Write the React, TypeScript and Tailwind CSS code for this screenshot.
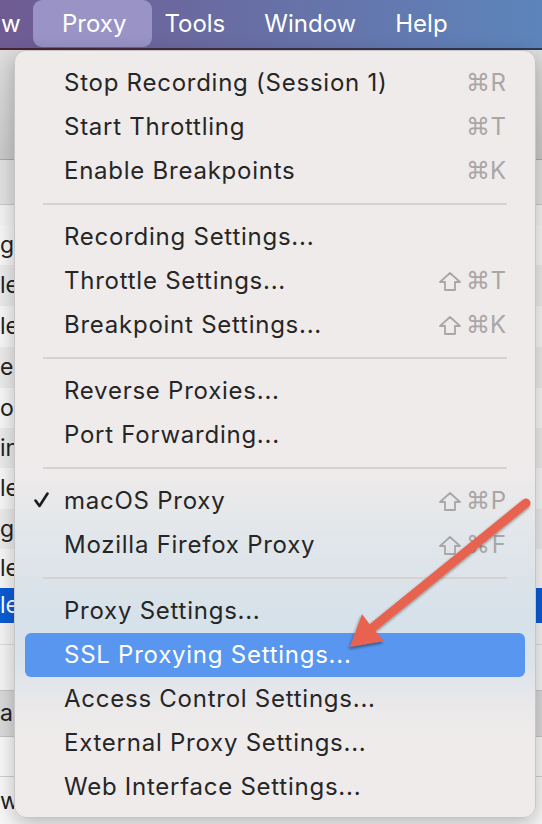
import { Fragment } from "react";

// Elementos del menú Proxy
type Item = { label: string; keys?: string[]; checked?: boolean; active?: boolean };

const groups: Item[][] = [
  [
    { label: "Stop Recording (Session 1)", keys: ["", "⌘", "R"] },
    { label: "Start Throttling", keys: ["", "⌘", "T"] },
    { label: "Enable Breakpoints", keys: ["", "⌘", "K"] },
  ],
  [
    { label: "Recording Settings..." },
    { label: "Throttle Settings...", keys: ["⇧", "⌘", "T"] },
    { label: "Breakpoint Settings...", keys: ["⇧", "⌘", "K"] },
  ],
  [{ label: "Reverse Proxies..." }, { label: "Port Forwarding..." }],
  [
    { label: "macOS Proxy", keys: ["⇧", "⌘", "P"], checked: true },
    { label: "Mozilla Firefox Proxy", keys: ["⇧", "⌘", "F"] },
  ],
  [
    { label: "Proxy Settings..." },
    { label: "SSL Proxying Settings...", active: true },
    { label: "Access Control Settings..." },
    { label: "External Proxy Settings..." },
    { label: "Web Interface Settings..." },
  ],
];

// Filas de la ventana de fondo (solo se ven los bordes)
const rows = [
  { h: "h-[20px]", bg: "bg-[#f3f3f3]", text: "" },
  { h: "h-[40px]", bg: "bg-[#f6f6f6]", text: "go" },
  { h: "h-[41px]", bg: "bg-[#ebebeb]", text: "le" },
  { h: "h-[41px]", bg: "bg-[#f6f6f6]", text: "le" },
  { h: "h-[41px]", bg: "bg-[#ebebeb]", text: "e" },
  { h: "h-[40px]", bg: "bg-[#f6f6f6]", text: "oc" },
  { h: "h-[40px]", bg: "bg-[#ebebeb]", text: "in" },
  { h: "h-[41px]", bg: "bg-[#f6f6f6]", text: "le" },
  { h: "h-[40px]", bg: "bg-[#ebebeb]", text: "go" },
  { h: "h-[39px]", bg: "bg-[#f6f6f6]", text: "le" },
];

// Texto recortado bajo el menú
function Clip({ text, white }: { text: string; white?: boolean }) {
  return (
    <div className={`w-[14px] overflow-hidden whitespace-nowrap text-[23px] ${white ? "text-white" : "text-[#222]"}`}>
      {text}
    </div>
  );
}

// Tecla Mayús dibujada como contorno
function ShiftIcon() {
  return (
    <svg width="22" height="19" viewBox="0 0 22 19">
      <path d="M11 1 L21 10 L16 10 L16 18 L6 18 L6 10 L1 10 Z" fill="none" stroke="#aaa6a6" strokeWidth="1.8" strokeLinejoin="round" />
    </svg>
  );
}

function Shortcut({ keys }: { keys: string[] }) {
  return (
    <div className="flex items-center text-[#aaa6a6]">
      <span className="w-[27px] flex items-center">{keys[0] ? <ShiftIcon /> : null}</span>
      <span className="w-[22px] text-center font-['DejaVu_Sans',sans-serif] text-[24px] leading-none">{keys[1]}</span>
      <span className="w-[18px] text-right text-[24px] leading-none">{keys[2]}</span>
    </div>
  );
}

function Check() {
  return (
    <svg width="15" height="16" viewBox="0 0 15 16" className="absolute left-[9px] top-[13px]">
      <path d="M1.5 8.5 L5.5 14 L13.5 1.5" fill="none" stroke="#1c1c1c" strokeWidth="2.6" strokeLinecap="round" strokeLinejoin="round" />
    </svg>
  );
}

function MenuRow({ item }: { item: Item }) {
  return (
    <div
      className={`relative mx-[10px] h-[44px] flex items-center justify-between pl-[39px] pr-[19px] rounded-[6px] ${
        item.active ? "bg-[#5896f0] text-white" : "text-[#262626]"
      }`}
    >
      {item.checked && <Check />}
      <span className="text-[24px] leading-none tracking-[0.75px]">{item.label}</span>
      {item.keys && <Shortcut keys={item.keys} />}
    </div>
  );
}

export default function App() {
  return (
    <div className="relative w-[542px] h-[824px] overflow-hidden bg-white font-['Inter','Liberation_Sans',sans-serif]">
      {/* Barra de menú */}
      <div className="h-[48px] flex items-center bg-gradient-to-r from-[#6f5b92] via-[#6770a6] to-[#5c85bc] text-white text-[24px]">
        <span className="w-[33px] pl-[1px]">w</span>
        <span className="h-[47px] -mt-[1px] flex items-center pl-[29px] pr-[26px] rounded-[9px] bg-[#9993c6]">Proxy</span>
        <span className="ml-[12px]">Tools</span>
        <span className="ml-[39px]">Window</span>
        <span className="ml-[39px]">Help</span>
      </div>
      <div className="h-[2px] bg-gradient-to-r from-[#4a2433] to-[#2d3a5a]" />

      {/* Ventana de fondo */}
      <div className="h-[110px] bg-gradient-to-b from-[#dedede] to-[#c9c9c9] border-b border-[#a9a9a9]" />
      <div className="h-[45px] bg-[#e1e1e1] border-b border-[#c6c6c6]" />
      {rows.map((r, i) => (
        <div key={i} className={`${r.h} ${r.bg} flex items-center`}>
          <Clip text={r.text} />
        </div>
      ))}
      <div className="h-[35px] bg-[#0b5cd5] flex items-center">
        <Clip text="le" white />
      </div>
      <div className="h-[22px] bg-[#f4f4f4] border-b border-[#dcdcdc]" />
      <div className="h-[45px] bg-[#f4f4f4]" />
      <div className="h-[47px] bg-[#d9d9d9] border-y border-[#c4c4c4] flex items-center">
        <Clip text="ar" />
      </div>
      <div className="h-[40px] bg-[#f7f7f7] border-b border-[#cfcfcf]" />
      <div className="h-[49px] bg-[#f7f7f7] flex items-center">
        <Clip text="w." />
      </div>

      {/* Menú desplegable */}
      <div className="absolute left-[14px] top-[50px] w-[522px] h-[768px] rounded-[12px] py-[10px] border border-[#c9c5c5] shadow-[0_6px_20px_rgba(0,0,0,0.25)] bg-[linear-gradient(to_bottom,#efebeb_0%,#efebeb_54%,#e1e6ea_64%,#d6e1e9_74%,#dbe3ea_80%,#ebe9ea_86%,#efebeb_90%,#efebeb_100%)]">
        {groups.map((g, gi) => (
          <Fragment key={gi}>
            {gi > 0 && (
              <div className="h-[22px] flex items-center px-[28px]">
                <div className="h-[2px] w-full bg-[#d7d2d2]" />
              </div>
            )}
            {g.map((item) => (
              <MenuRow key={item.label} item={item} />
            ))}
          </Fragment>
        ))}
      </div>

      {/* Flecha de anotación */}
      <svg className="absolute left-0 top-0 pointer-events-none" width="542" height="824" viewBox="0 0 542 824">
        <defs>
          <filter id="sh" x="-20%" y="-20%" width="140%" height="140%">
            <feDropShadow dx="-1" dy="2" stdDeviation="1.5" floodColor="#000" floodOpacity="0.45" />
          </filter>
        </defs>
        <g filter="url(#sh)" fill="#e8644f">
          <line x1="526" y1="503" x2="372" y2="628" stroke="#e8644f" strokeWidth="9" strokeLinecap="round" />
          <polygon points="350,647 362,614 371,626 384,641" />
        </g>
      </svg>
    </div>
  );
}
